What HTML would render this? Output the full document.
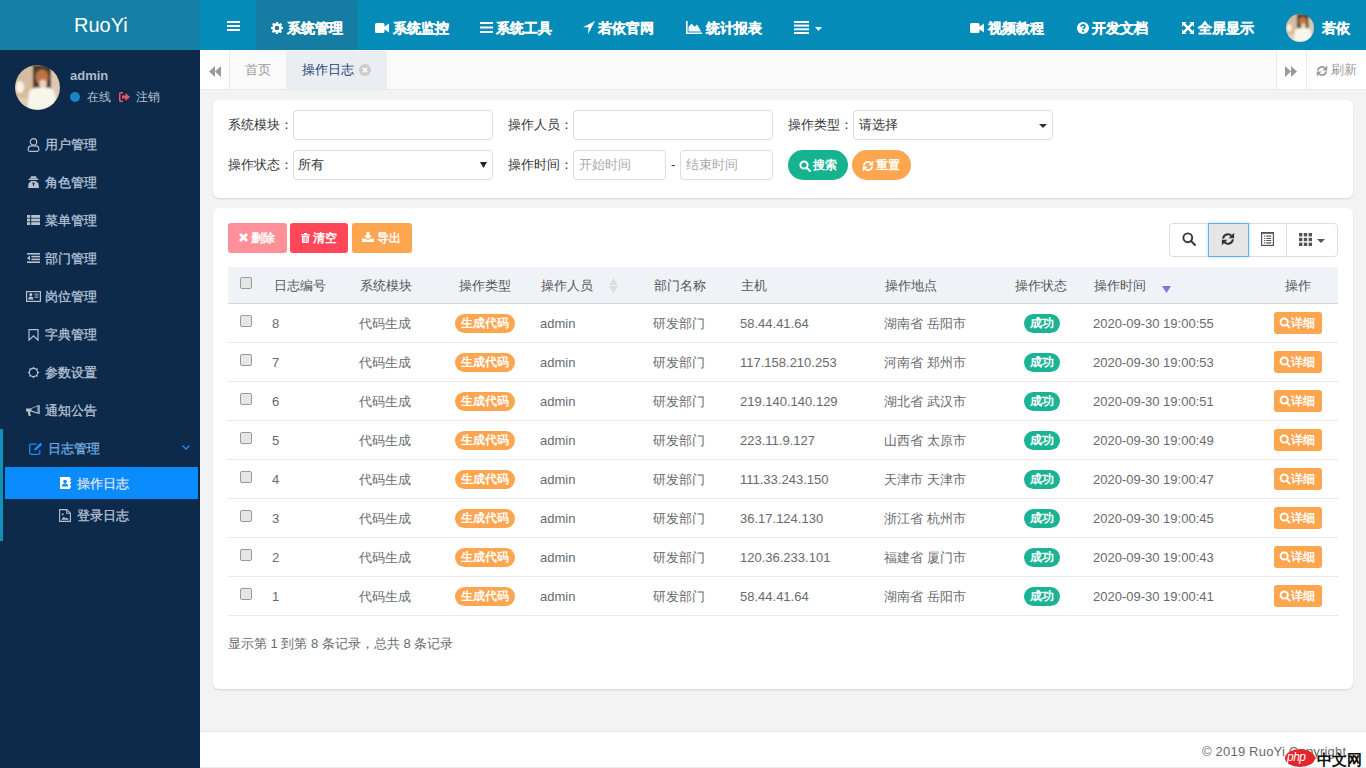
<!DOCTYPE html>
<html><head><meta charset="utf-8">
<style>
*{box-sizing:border-box;margin:0;padding:0}
html,body{width:1366px;height:768px;overflow:hidden}
body{position:relative;background:#f3f3f4;font-family:"Liberation Sans",sans-serif;font-size:13px;color:#676a6c}
.a{position:absolute}
.t{position:absolute;white-space:nowrap;line-height:1}
svg{position:absolute;display:block}
/* header */
#logo{left:0;top:0;width:200px;height:50px;background:#167fa5}
#nav{left:200px;top:0;width:1166px;height:50px;background:#058bb8}
.nv{color:#fff;font-weight:bold;font-size:14px;-webkit-text-stroke:0.3px #fff}
#side{left:0;top:50px;width:200px;height:718px;background:#0d2a4a}
.mi{color:#b6c3d7;font-weight:normal;font-size:13px;-webkit-text-stroke:0.3px #b6c3d7}
/* tabs */
#tabs{left:200px;top:50px;width:1166px;height:40px;background:#fafafa;border-bottom:1px solid #e7e7e7}
.card{background:#fff;border-radius:6px;box-shadow:0 1px 2px rgba(0,0,0,.12)}
.lbl{color:#333;font-size:13px}
.inp{background:#fff;border:1px solid #ddd;border-radius:4px}
.btn{border-radius:3px;color:#fff;font-size:12px}
.th{color:#555;font-size:13px}
.td{color:#676a6c;font-size:13px}
.row{left:228px;width:1110px;height:1px;background:#e7eaec}
.cb{width:12px;height:12px;border:1px solid #999;border-radius:2px;background:#e6e6e6}
.bdg{height:19px;border-radius:10px;color:#fff;font-weight:bold;font-size:12px;line-height:19px;text-align:center}
</style></head><body>

<!-- header -->
<div id="logo" class="a"></div>
<div class="t" style="left:74px;top:15px;font-size:20px;color:#fff">RuoYi</div>
<div id="nav" class="a"></div>
<div class="a" style="left:256px;top:0;width:102px;height:50px;background:#157ca3;border-radius:4px 4px 0 0"></div>
<!-- hamburger -->
<svg style="left:227px;top:21px" width="13" height="10" viewBox="0 0 13 10" fill="#fff"><rect y="0" width="13" height="2"/><rect y="4" width="13" height="2"/><rect y="8" width="13" height="2"/></svg>
<!-- gear -->
<svg style="left:271px;top:22px" width="12" height="12" viewBox="0 0 24 24" fill="#fff"><path d="M10 0h4l.6 3.2 2.2.9 2.7-1.9 2.8 2.8-1.9 2.7.9 2.2L24 10v4l-3.2.6-.9 2.2 1.9 2.7-2.8 2.8-2.7-1.9-2.2.9L14 24h-4l-.6-3.2-2.2-.9-2.7 1.9-2.8-2.8 1.9-2.7-.9-2.2L0 14v-4l3.2-.6.9-2.2-1.9-2.7 2.8-2.8 2.7 1.9 2.2-.9zM12 7.5a4.5 4.5 0 1 0 0 9a4.5 4.5 0 1 0 0-9z"/></svg>
<div class="t nv" style="left:287px;top:21px">系统管理</div>
<!-- camera -->
<svg style="left:375px;top:23px" width="14" height="10" viewBox="0 0 14 10" fill="#fff"><rect x="0" y="0" width="9.5" height="10" rx="1.5"/><path d="M9 4L14 0.5V9.5L9 6z"/></svg>
<div class="t nv" style="left:393px;top:21px">系统监控</div>
<!-- bars -->
<svg style="left:480px;top:22px" width="13" height="11" viewBox="0 0 13 11" fill="#fff"><rect y="0" width="13" height="2"/><rect y="4.5" width="13" height="2"/><rect y="9" width="13" height="2"/></svg>
<div class="t nv" style="left:496px;top:21px">系统工具</div>
<!-- location arrow -->
<svg style="left:583px;top:21px" width="12" height="13" viewBox="0 0 12 13" fill="#fff"><path d="M12 0L0 6.2h5.6L5 13z"/></svg>
<div class="t nv" style="left:598px;top:21px">若依官网</div>
<!-- area chart -->
<svg style="left:686px;top:21px" width="16" height="13" viewBox="0 0 16 13" fill="#fff"><path d="M0 0h1.6v11.4H16V13H0z"/><path d="M2.5 10.5V6l3-3.5 3 3.2 2.5-2.2 4 7z"/></svg>
<div class="t nv" style="left:706px;top:21px">统计报表</div>
<!-- bars4 + caret -->
<svg style="left:794px;top:21px" width="15" height="13" viewBox="0 0 15 13" fill="#fff"><rect y="0" width="15" height="2"/><rect y="3.6" width="15" height="2"/><rect y="7.3" width="15" height="2"/><rect y="11" width="15" height="2"/></svg>
<svg style="left:815px;top:27px" width="7" height="4" viewBox="0 0 7 4" fill="#fff"><path d="M0 0h7L3.5 4z"/></svg>
<!-- right nav -->
<svg style="left:970px;top:23px" width="14" height="10" viewBox="0 0 14 10" fill="#fff"><rect x="0" y="0" width="9.5" height="10" rx="1.5"/><path d="M9 4L14 0.5V9.5L9 6z"/></svg>
<div class="t nv" style="left:988px;top:21px">视频教程</div>
<svg style="left:1077px;top:22px" width="12" height="12" viewBox="0 0 24 24"><circle cx="12" cy="12" r="12" fill="#fff"/><path d="M8.3 9.3Q8.3 5.6 12.1 5.6Q15.9 5.6 15.9 8.9Q15.9 10.8 13.8 12Q12.2 12.9 12.2 14.2" fill="none" stroke="#058bb8" stroke-width="3.3"/><rect x="10.3" y="16.3" width="3.7" height="3.5" fill="#058bb8"/></svg>
<div class="t nv" style="left:1092px;top:21px">开发文档</div>
<svg style="left:1182px;top:22px" width="12" height="12" viewBox="0 0 14 14" fill="#fff"><path d="M0 0h5.5L0 5.5z M14 0v5.5L8.5 0z M0 14V8.5L5.5 14z M14 14H8.5L14 8.5z"/><path d="M2 2L12 12M12 2L2 12" stroke="#fff" stroke-width="2.8"/></svg>
<div class="t nv" style="left:1198px;top:21px">全屏显示</div>
<svg style="left:1286px;top:14px" width="28" height="28" viewBox="0 0 45 45"><defs><filter id="f2" x="-10%" y="-10%" width="120%" height="120%"><feGaussianBlur stdDeviation="1.3"/></filter><clipPath id="c2"><circle cx="22.5" cy="22.5" r="22.5"/></clipPath></defs><g clip-path="url(#c2)"><g filter="url(#f2)"><rect x="-5" y="-5" width="55" height="55" fill="#c4a886"/><rect x="0" y="0" width="17" height="45" fill="#d3bc9f"/><ellipse cx="5" cy="22" rx="4" ry="6" fill="#fbf3e4"/><rect x="18" y="0" width="19" height="24" fill="#4e3b2a"/><rect x="36" y="4" width="9" height="41" fill="#dccab2"/><ellipse cx="27" cy="12" rx="6.5" ry="7.5" fill="#bb7444"/><ellipse cx="28" cy="19" rx="3.8" ry="4.2" fill="#ecd3bf"/><path d="M12 45L14 27Q16 22.5 23 22.5H33Q39 23.5 40 29L42 45z" fill="#f8f5ea"/><rect x="0" y="33" width="13" height="12" fill="#e0cdb3"/></g></g></svg>
<div class="t nv" style="left:1322px;top:21px">若依</div>

<!-- sidebar -->
<div id="side" class="a"></div>
<svg style="left:15px;top:65px" width="45" height="45" viewBox="0 0 45 45"><defs><filter id="f1" x="-10%" y="-10%" width="120%" height="120%"><feGaussianBlur stdDeviation="1.3"/></filter><clipPath id="c1"><circle cx="22.5" cy="22.5" r="22.5"/></clipPath></defs><g clip-path="url(#c1)"><g filter="url(#f1)"><rect x="-5" y="-5" width="55" height="55" fill="#c4a886"/><rect x="0" y="0" width="17" height="45" fill="#d3bc9f"/><ellipse cx="5" cy="22" rx="4" ry="6" fill="#fbf3e4"/><rect x="18" y="0" width="19" height="24" fill="#4e3b2a"/><rect x="36" y="4" width="9" height="41" fill="#dccab2"/><ellipse cx="27" cy="12" rx="6.5" ry="7.5" fill="#bb7444"/><ellipse cx="28" cy="19" rx="3.8" ry="4.2" fill="#ecd3bf"/><path d="M12 45L14 27Q16 22.5 23 22.5H33Q39 23.5 40 29L42 45z" fill="#f8f5ea"/><rect x="0" y="33" width="13" height="12" fill="#e0cdb3"/></g></g></svg>
<div class="t" style="left:70px;top:69px;font-size:13px;font-weight:bold;color:#aebbcc">admin</div>
<div class="a" style="left:70px;top:92px;width:10px;height:10px;border-radius:50%;background:#1c84c6"></div>
<div class="t" style="left:87px;top:91px;font-size:12px;color:#b3c2d3">在线</div>
<svg style="left:119px;top:92px" width="11" height="10" viewBox="0 0 11 10" fill="#ed5565"><path d="M0 1.5Q0 0 1.5 0H4v1.5H1.5v7H4V10H1.5Q0 10 0 8.5z"/><path d="M3 3.5h3.5V1L11 5 6.5 9V6.5H3z"/></svg>
<div class="t" style="left:136px;top:91px;font-size:12px;color:#b3c2d3">注销</div>

<!-- menu icons -->
<svg style="left:27px;top:138px" width="13" height="14" viewBox="0 0 13 14" fill="none" stroke="#b7c2cf" stroke-width="1.2"><circle cx="6.5" cy="3.9" r="3.2"/><path d="M1.1 11.6Q1.1 7.9 4.6 7.9h3.8q3.5 0 3.5 3.7q0 1.8-1.8 1.8H2.9Q1.1 13.4 1.1 11.6z"/></svg>
<div class="t mi" style="left:45px;top:138px">用户管理</div>
<svg style="left:28px;top:176px" width="11" height="12" viewBox="0 0 11 12" fill="#b7c2cf"><path d="M1.2 2.6h8.6L10.6 4H0.4z"/><path d="M3 0.3h5l.7 2.3H2.3z"/><path d="M2.8 5h5.4l.4 1.2 1.6.6.8 5.2H0l.8-5.2 1.6-.6z"/><path d="M4.3 6.6L5.5 11 6.7 6.6z" fill="#0d2a4a"/></svg>
<div class="t mi" style="left:45px;top:176px">角色管理</div>
<svg style="left:27px;top:215px" width="13" height="10" viewBox="0 0 13 10" fill="#b7c2cf"><rect x="0" y="0" width="3.2" height="2.8"/><rect x="4.2" y="0" width="8.8" height="2.8"/><rect x="0" y="3.6" width="3.2" height="2.8"/><rect x="4.2" y="3.6" width="8.8" height="2.8"/><rect x="0" y="7.2" width="3.2" height="2.8"/><rect x="4.2" y="7.2" width="8.8" height="2.8"/></svg>
<div class="t mi" style="left:45px;top:214px">菜单管理</div>
<svg style="left:27px;top:253px" width="13" height="10" viewBox="0 0 13 10" fill="#b7c2cf"><rect x="0" y="0" width="13" height="1.6"/><rect x="4.4" y="2.8" width="8.6" height="1.6"/><rect x="4.4" y="5.6" width="8.6" height="1.6"/><rect x="0" y="8.4" width="13" height="1.6"/><path d="M3 2.6v4.8L0 5z"/></svg>
<div class="t mi" style="left:45px;top:252px">部门管理</div>
<svg style="left:26px;top:291px" width="15" height="11" viewBox="0 0 15 11"><rect x="0.6" y="0.6" width="13.8" height="9.8" fill="none" stroke="#b7c2cf" stroke-width="1.2"/><circle cx="4.8" cy="3.6" r="1.6" fill="#b7c2cf"/><path d="M2.2 8.6q0-3 2.6-3t2.6 3z" fill="#b7c2cf"/><rect x="8.5" y="2.6" width="4" height="2" fill="#8190a5"/><rect x="8.5" y="5.6" width="4" height="1" fill="#b7c2cf"/></svg>
<div class="t mi" style="left:45px;top:290px">岗位管理</div>
<svg style="left:28px;top:329px" width="11" height="12" viewBox="0 0 11 12" fill="none" stroke="#b7c2cf" stroke-width="1.2"><path d="M1 0.6h9v10.6L5.5 6.8 1 11.2z"/></svg>
<div class="t mi" style="left:45px;top:328px">字典管理</div>
<svg style="left:27px;top:366px" width="13" height="13" viewBox="0 0 26 26" fill="none" stroke="#b7c2cf" stroke-width="2.2"><circle cx="13" cy="13" r="8.2"/><path d="M13 1.5l2 3.5h-4zM13 24.5l2-3.5h-4zM1.5 13l3.5 2v-4zM24.5 13l-3.5 2v-4zM4.9 4.9l3.9 1.1-2.8 2.8zM21.1 21.1l-3.9-1.1 2.8-2.8zM21.1 4.9l-1.1 3.9-2.8-2.8zM4.9 21.1l1.1-3.9 2.8 2.8z" fill="#b7c2cf" stroke-width="0.8"/></svg>
<div class="t mi" style="left:45px;top:366px">参数设置</div>
<svg style="left:26px;top:405px" width="14" height="11" viewBox="0 0 14 11" fill="#b7c2cf"><path d="M0 3.5h4.5L12.5 0v9L4.5 6.5H4l.8 4.5H2.6L1.8 6.5H0z"/><path d="M12.5 0h1.2v9h-1.2z"/><path d="M5.5 3.8L11.5 1.2v6.4L5.5 5.6z" fill="#0d2a4a"/></svg>
<div class="t mi" style="left:45px;top:404px">通知公告</div>

<!-- active group -->
<div class="a" style="left:0;top:429px;width:3px;height:112px;background:#0f91b9"></div>
<svg style="left:29px;top:442px" width="14" height="13" viewBox="0 0 14 13" fill="none" stroke="#1890ff" stroke-width="1.3"><path d="M7.5 2.2H2.2Q0.7 2.2 0.7 3.7v7.1q0 1.5 1.5 1.5h7.1q1.5 0 1.5-1.5V7.8"/><path d="M5.2 8.6l.5-2.2L11.5.7l1.7 1.7-5.8 5.7z" fill="#1890ff" stroke="none"/></svg>
<div class="t mi" style="left:48px;top:442px;color:#1890ff">日志管理</div>
<svg style="left:182px;top:445px" width="8" height="5" viewBox="0 0 8 5" fill="none" stroke="#1890ff" stroke-width="1.3"><path d="M0.5 0.5L4 4 7.5 0.5"/></svg>
<div class="a" style="left:5px;top:467px;width:193px;height:32px;background:#0a8cff"></div>
<svg style="left:59px;top:477px" width="12" height="12" viewBox="0 0 12 12" fill="#fff"><path d="M1 0h10v12H1z"/><path d="M11 1.5h1v2h-1zM11 5h1v2h-1zM11 8.5h1v2h-1z"/><circle cx="6" cy="4.6" r="1.8" fill="#0a8cff"/><path d="M2.8 9.5q0-3 3.2-3t3.2 3z" fill="#0a8cff"/></svg>
<div class="t mi" style="left:77px;top:477px;color:#fff">操作日志</div>
<svg style="left:59px;top:509px" width="12" height="13" viewBox="0 0 12 13" fill="none" stroke="#b7c2cf" stroke-width="1.1"><path d="M0.6 0.6h7.2l3.6 3.6v8.2H0.6z"/><path d="M7.8 0.6v3.6h3.6"/><path d="M2.2 10.8l2.6-3 1.8 1.8 1.2-1 2 2.2z" fill="#b7c2cf" stroke="none"/><circle cx="3.6" cy="5.2" r="1" fill="#b7c2cf" stroke="none"/></svg>
<div class="t mi" style="left:77px;top:509px">登录日志</div>

<!-- tabs -->
<div id="tabs" class="a"></div>
<div class="a" style="left:200px;top:50px;width:30px;height:39px;background:#fff;border-right:1px solid #e7eaec"></div>
<svg style="left:209px;top:66px" width="12" height="11" viewBox="0 0 12 11" fill="#999"><path d="M6 0v11L0 5.5z M12 0v11L6 5.5z"/></svg>
<div class="t" style="left:245px;top:63px;color:#999">首页</div>
<div class="a" style="left:286px;top:51px;width:101px;height:38px;background:#eaedf1"></div>
<div class="t" style="left:302px;top:63px;color:#1f4376">操作日志</div>
<svg style="left:359px;top:64px" width="12" height="12" viewBox="0 0 12 12"><circle cx="6" cy="6" r="6" fill="#ccc"/><path d="M3.8 3.8L8.2 8.2M8.2 3.8L3.8 8.2" stroke="#fff" stroke-width="1.6"/></svg>
<div class="a" style="left:1276px;top:50px;width:90px;height:39px;background:#fff"></div>
<div class="a" style="left:1276px;top:50px;width:1px;height:39px;background:#e7eaec"></div>
<div class="a" style="left:1306px;top:50px;width:1px;height:39px;background:#e7eaec"></div>
<svg style="left:1285px;top:66px" width="12" height="11" viewBox="0 0 12 11" fill="#999"><path d="M0 0v11L6 5.5z M6 0v11L12 5.5z"/></svg>
<svg style="left:1316px;top:65px" width="12" height="12" viewBox="0 0 24 24" fill="#999"><path d="M3.6 11.2A8.4 8.4 0 0 1 18.2 6.6" stroke="#999" stroke-width="3.4" fill="none"/><path d="M22.5 1.2V10.8H12.9z" fill="#999"/><path d="M20.4 12.8A8.4 8.4 0 0 1 5.8 17.4" stroke="#999" stroke-width="3.4" fill="none"/><path d="M1.5 22.8V13.2H11.1z" fill="#999"/></svg>
<div class="t" style="left:1331px;top:63px;color:#999">刷新</div>

<!-- cards -->
<div class="a card" style="left:213px;top:100px;width:1140px;height:98px"></div>
<div class="a card" style="left:213px;top:208px;width:1140px;height:481px"></div>
<!-- search form -->
<div class="t lbl" style="left:228px;top:118px">系统模块：</div>
<div class="a inp" style="left:293px;top:110px;width:200px;height:30px"></div>
<div class="t lbl" style="left:508px;top:118px">操作人员：</div>
<div class="a inp" style="left:573px;top:110px;width:200px;height:30px"></div>
<div class="t lbl" style="left:788px;top:118px">操作类型：</div>
<div class="a inp" style="left:853px;top:110px;width:200px;height:30px"></div>
<div class="t" style="left:859px;top:118px;color:#333">请选择</div>
<svg style="left:1039px;top:124px" width="8" height="4" viewBox="0 0 8 4" fill="#333"><path d="M0 0h8L4 4z"/></svg>
<div class="t lbl" style="left:228px;top:158px">操作状态：</div>
<div class="a inp" style="left:293px;top:150px;width:200px;height:30px"></div>
<div class="t" style="left:298px;top:158px;color:#333">所有</div>
<svg style="left:480px;top:162px" width="7" height="6" viewBox="0 0 7 6" fill="#222"><path d="M0 0h7L3.5 6z"/></svg>
<div class="t lbl" style="left:508px;top:158px">操作时间：</div>
<div class="a inp" style="left:573px;top:150px;width:93px;height:30px"></div>
<div class="t" style="left:579px;top:158px;color:#aaa">开始时间</div>
<div class="t" style="left:671px;top:158px;color:#333">-</div>
<div class="a inp" style="left:680px;top:150px;width:93px;height:30px"></div>
<div class="t" style="left:686px;top:158px;color:#aaa">结束时间</div>
<div class="a" style="left:788px;top:150px;width:60px;height:30px;border-radius:15px;background:#15b390"></div>
<svg style="left:799px;top:160px" width="12" height="12" viewBox="0 0 12 12" fill="none" stroke="#fff" stroke-width="2"><circle cx="5" cy="5" r="3.6"/><path d="M7.6 7.6L11 11" stroke-linecap="round"/></svg>
<div class="t" style="left:813px;top:159px;color:#fff;font-size:12px;font-weight:bold">搜索</div>
<div class="a" style="left:852px;top:150px;width:59px;height:30px;border-radius:15px;background:#fda54f"></div>
<svg style="left:862px;top:160px" width="12" height="12" viewBox="0 0 24 24" fill="#fff"><path d="M3.6 11.2A8.4 8.4 0 0 1 18.2 6.6" stroke="#fff" stroke-width="3.4" fill="none"/><path d="M22.5 1.2V10.8H12.9z" fill="#fff"/><path d="M20.4 12.8A8.4 8.4 0 0 1 5.8 17.4" stroke="#fff" stroke-width="3.4" fill="none"/><path d="M1.5 22.8V13.2H11.1z" fill="#fff"/></svg>
<div class="t" style="left:876px;top:159px;color:#fff;font-size:12px;font-weight:bold">重置</div>

<!-- table toolbar -->
<div class="a btn" style="left:228px;top:223px;width:59px;height:30px;background:#ff8f98"></div>
<svg style="left:239px;top:233px" width="9" height="9" viewBox="0 0 9 9" stroke="#fff" stroke-width="2.9"><path d="M1 1L8 8M8 1L1 8"/></svg>
<div class="t" style="left:251px;top:232px;color:#fff;font-size:12px;font-weight:bold">删除</div>
<div class="a btn" style="left:290px;top:223px;width:58px;height:30px;background:#ff4757"></div>
<svg style="left:301px;top:233px" width="9" height="10" viewBox="0 0 9 10" fill="#fff"><path d="M0 1.2h9v1.2H0z M3 0h3v1.2H3z M0.8 3h7.4l-.5 7H1.3z"/><path d="M3 4v5M4.5 4v5M6 4v5" stroke="#ff4757" stroke-width="0.6"/></svg>
<div class="t" style="left:313px;top:232px;color:#fff;font-size:12px;font-weight:bold">清空</div>
<div class="a btn" style="left:352px;top:223px;width:60px;height:30px;background:#fda54f"></div>
<svg style="left:362px;top:232px" width="12" height="10" viewBox="0 0 12 10" fill="#fff"><path d="M4.5 0h3v3.5H10L6 7.2 2 3.5h2.5z"/><path d="M0 6.5h3.6L6 8.6l2.4-2.1H12V10H0z"/></svg>
<div class="t" style="left:377px;top:232px;color:#fff;font-size:12px;font-weight:bold">导出</div>
<div class="a" style="left:1169px;top:223px;width:169px;height:34px;border:1px solid #ddd;border-radius:4px;background:#fff"></div>
<div class="a" style="left:1286px;top:224px;width:1px;height:32px;background:#ddd"></div>
<div class="a" style="left:1208px;top:223px;width:41px;height:34px;border:1px solid #66afe9;background:#e6e6e6;box-shadow:0 0 3px rgba(102,175,233,.5)"></div>
<svg style="left:1182px;top:232px" width="14" height="14" viewBox="0 0 14 14" fill="none" stroke="#333" stroke-width="1.9"><circle cx="5.8" cy="5.8" r="4.4"/><path d="M9 9L13 13" stroke-linecap="round"/></svg>
<svg style="left:1221px;top:232px" width="14" height="14" viewBox="0 0 24 24" fill="#333"><path d="M3.6 11.2A8.4 8.4 0 0 1 18.2 6.6" stroke="#333" stroke-width="3.4" fill="none"/><path d="M22.5 1.2V10.8H12.9z" fill="#333"/><path d="M20.4 12.8A8.4 8.4 0 0 1 5.8 17.4" stroke="#333" stroke-width="3.4" fill="none"/><path d="M1.5 22.8V13.2H11.1z" fill="#333"/></svg>
<svg style="left:1261px;top:232px" width="13" height="14" viewBox="0 0 13 14"><rect x="0.6" y="0.6" width="11.8" height="12.8" fill="none" stroke="#555" stroke-width="1.2"/><rect x="0" y="0" width="13" height="1.8" fill="#555"/><path d="M3 4.1h1.2M3 6.5h1.2M3 8.5h1.2M3 10.9h1.2M5.2 4.1h5M5.2 6.5h5M5.2 8.5h5M5.2 10.9h5" stroke="#555" stroke-width="1.1"/></svg>
<svg style="left:1299px;top:233px" width="13" height="13" viewBox="0 0 13 13" fill="#555"><rect x="0" y="0" width="3.4" height="3.4"/><rect x="4.8" y="0" width="3.4" height="3.4"/><rect x="9.6" y="0" width="3.4" height="3.4"/><rect x="0" y="4.8" width="3.4" height="3.4"/><rect x="4.8" y="4.8" width="3.4" height="3.4"/><rect x="9.6" y="4.8" width="3.4" height="3.4"/><rect x="0" y="9.6" width="3.4" height="3.4"/><rect x="4.8" y="9.6" width="3.4" height="3.4"/><rect x="9.6" y="9.6" width="3.4" height="3.4"/></svg>
<svg style="left:1317px;top:239px" width="8" height="4" viewBox="0 0 8 4" fill="#555"><path d="M0 0h8L4 4z"/></svg>
<!-- table header -->
<div class="a" style="left:228px;top:267px;width:1110px;height:36px;background:#eff3f8"></div>
<div class="a" style="left:228px;top:303px;width:1110px;height:1px;background:#d4d4d4"></div>
<div class="a cb" style="left:240px;top:277px"></div>
<div class="t th" style="left:274px;top:279px">日志编号</div>
<div class="t th" style="left:360px;top:279px">系统模块</div>
<div class="t th" style="left:459px;top:279px">操作类型</div>
<div class="t th" style="left:541px;top:279px">操作人员</div>
<div class="t th" style="left:654px;top:279px">部门名称</div>
<div class="t th" style="left:741px;top:279px">主机</div>
<div class="t th" style="left:885px;top:279px">操作地点</div>
<div class="t th" style="left:1015px;top:279px">操作状态</div>
<div class="t th" style="left:1094px;top:279px">操作时间</div>
<div class="t th" style="left:1285px;top:279px">操作</div>
<svg style="left:609px;top:278px" width="9" height="15" viewBox="0 0 9 15" fill="#dcdcdc"><path d="M4.5 0L9 7H0z M0 8h9L4.5 15z"/></svg>
<svg style="left:1162px;top:286px" width="9" height="7" viewBox="0 0 9 7" fill="#7a7ad8"><path d="M0 0h9L4.5 7z"/></svg>
<!-- row 8 -->
<div class="a row" style="top:342px"></div>
<div class="a cb" style="left:240px;top:315px"></div>
<div class="t td" style="left:272px;top:317px">8</div>
<div class="t td" style="left:359px;top:317px">代码生成</div>
<div class="a bdg" style="left:455px;top:314px;width:60px;background:#fda54f">生成代码</div>
<div class="t td" style="left:540px;top:317px">admin</div>
<div class="t td" style="left:653px;top:317px">研发部门</div>
<div class="t td" style="left:740px;top:317px">58.44.41.64</div>
<div class="t td" style="left:884px;top:317px">湖南省 岳阳市</div>
<div class="a bdg" style="left:1024px;top:314px;width:36px;background:#1ab394">成功</div>
<div class="t td" style="left:1093px;top:317px">2020-09-30 19:00:55</div>
<div class="a btn" style="left:1274px;top:312px;width:48px;height:22px;background:#fda54f"></div>
<svg style="left:1279px;top:317px" width="12" height="12" viewBox="0 0 12 12" fill="none" stroke="#fff" stroke-width="2"><circle cx="5.2" cy="5" r="3.6"/><path d="M7.8 7.8L10.6 10.6" stroke-linecap="round"/></svg>
<div class="t" style="left:1291px;top:317px;color:#fff;font-size:12px;font-weight:bold">详细</div>
<!-- row 7 -->
<div class="a row" style="top:381px"></div>
<div class="a cb" style="left:240px;top:354px"></div>
<div class="t td" style="left:272px;top:356px">7</div>
<div class="t td" style="left:359px;top:356px">代码生成</div>
<div class="a bdg" style="left:455px;top:353px;width:60px;background:#fda54f">生成代码</div>
<div class="t td" style="left:540px;top:356px">admin</div>
<div class="t td" style="left:653px;top:356px">研发部门</div>
<div class="t td" style="left:740px;top:356px">117.158.210.253</div>
<div class="t td" style="left:884px;top:356px">河南省 郑州市</div>
<div class="a bdg" style="left:1024px;top:353px;width:36px;background:#1ab394">成功</div>
<div class="t td" style="left:1093px;top:356px">2020-09-30 19:00:53</div>
<div class="a btn" style="left:1274px;top:351px;width:48px;height:22px;background:#fda54f"></div>
<svg style="left:1279px;top:356px" width="12" height="12" viewBox="0 0 12 12" fill="none" stroke="#fff" stroke-width="2"><circle cx="5.2" cy="5" r="3.6"/><path d="M7.8 7.8L10.6 10.6" stroke-linecap="round"/></svg>
<div class="t" style="left:1291px;top:356px;color:#fff;font-size:12px;font-weight:bold">详细</div>
<!-- row 6 -->
<div class="a row" style="top:420px"></div>
<div class="a cb" style="left:240px;top:393px"></div>
<div class="t td" style="left:272px;top:395px">6</div>
<div class="t td" style="left:359px;top:395px">代码生成</div>
<div class="a bdg" style="left:455px;top:392px;width:60px;background:#fda54f">生成代码</div>
<div class="t td" style="left:540px;top:395px">admin</div>
<div class="t td" style="left:653px;top:395px">研发部门</div>
<div class="t td" style="left:740px;top:395px">219.140.140.129</div>
<div class="t td" style="left:884px;top:395px">湖北省 武汉市</div>
<div class="a bdg" style="left:1024px;top:392px;width:36px;background:#1ab394">成功</div>
<div class="t td" style="left:1093px;top:395px">2020-09-30 19:00:51</div>
<div class="a btn" style="left:1274px;top:390px;width:48px;height:22px;background:#fda54f"></div>
<svg style="left:1279px;top:395px" width="12" height="12" viewBox="0 0 12 12" fill="none" stroke="#fff" stroke-width="2"><circle cx="5.2" cy="5" r="3.6"/><path d="M7.8 7.8L10.6 10.6" stroke-linecap="round"/></svg>
<div class="t" style="left:1291px;top:395px;color:#fff;font-size:12px;font-weight:bold">详细</div>
<!-- row 5 -->
<div class="a row" style="top:459px"></div>
<div class="a cb" style="left:240px;top:432px"></div>
<div class="t td" style="left:272px;top:434px">5</div>
<div class="t td" style="left:359px;top:434px">代码生成</div>
<div class="a bdg" style="left:455px;top:431px;width:60px;background:#fda54f">生成代码</div>
<div class="t td" style="left:540px;top:434px">admin</div>
<div class="t td" style="left:653px;top:434px">研发部门</div>
<div class="t td" style="left:740px;top:434px">223.11.9.127</div>
<div class="t td" style="left:884px;top:434px">山西省 太原市</div>
<div class="a bdg" style="left:1024px;top:431px;width:36px;background:#1ab394">成功</div>
<div class="t td" style="left:1093px;top:434px">2020-09-30 19:00:49</div>
<div class="a btn" style="left:1274px;top:429px;width:48px;height:22px;background:#fda54f"></div>
<svg style="left:1279px;top:434px" width="12" height="12" viewBox="0 0 12 12" fill="none" stroke="#fff" stroke-width="2"><circle cx="5.2" cy="5" r="3.6"/><path d="M7.8 7.8L10.6 10.6" stroke-linecap="round"/></svg>
<div class="t" style="left:1291px;top:434px;color:#fff;font-size:12px;font-weight:bold">详细</div>
<!-- row 4 -->
<div class="a row" style="top:498px"></div>
<div class="a cb" style="left:240px;top:471px"></div>
<div class="t td" style="left:272px;top:473px">4</div>
<div class="t td" style="left:359px;top:473px">代码生成</div>
<div class="a bdg" style="left:455px;top:470px;width:60px;background:#fda54f">生成代码</div>
<div class="t td" style="left:540px;top:473px">admin</div>
<div class="t td" style="left:653px;top:473px">研发部门</div>
<div class="t td" style="left:740px;top:473px">111.33.243.150</div>
<div class="t td" style="left:884px;top:473px">天津市 天津市</div>
<div class="a bdg" style="left:1024px;top:470px;width:36px;background:#1ab394">成功</div>
<div class="t td" style="left:1093px;top:473px">2020-09-30 19:00:47</div>
<div class="a btn" style="left:1274px;top:468px;width:48px;height:22px;background:#fda54f"></div>
<svg style="left:1279px;top:473px" width="12" height="12" viewBox="0 0 12 12" fill="none" stroke="#fff" stroke-width="2"><circle cx="5.2" cy="5" r="3.6"/><path d="M7.8 7.8L10.6 10.6" stroke-linecap="round"/></svg>
<div class="t" style="left:1291px;top:473px;color:#fff;font-size:12px;font-weight:bold">详细</div>
<!-- row 3 -->
<div class="a row" style="top:537px"></div>
<div class="a cb" style="left:240px;top:510px"></div>
<div class="t td" style="left:272px;top:512px">3</div>
<div class="t td" style="left:359px;top:512px">代码生成</div>
<div class="a bdg" style="left:455px;top:509px;width:60px;background:#fda54f">生成代码</div>
<div class="t td" style="left:540px;top:512px">admin</div>
<div class="t td" style="left:653px;top:512px">研发部门</div>
<div class="t td" style="left:740px;top:512px">36.17.124.130</div>
<div class="t td" style="left:884px;top:512px">浙江省 杭州市</div>
<div class="a bdg" style="left:1024px;top:509px;width:36px;background:#1ab394">成功</div>
<div class="t td" style="left:1093px;top:512px">2020-09-30 19:00:45</div>
<div class="a btn" style="left:1274px;top:507px;width:48px;height:22px;background:#fda54f"></div>
<svg style="left:1279px;top:512px" width="12" height="12" viewBox="0 0 12 12" fill="none" stroke="#fff" stroke-width="2"><circle cx="5.2" cy="5" r="3.6"/><path d="M7.8 7.8L10.6 10.6" stroke-linecap="round"/></svg>
<div class="t" style="left:1291px;top:512px;color:#fff;font-size:12px;font-weight:bold">详细</div>
<!-- row 2 -->
<div class="a row" style="top:576px"></div>
<div class="a cb" style="left:240px;top:549px"></div>
<div class="t td" style="left:272px;top:551px">2</div>
<div class="t td" style="left:359px;top:551px">代码生成</div>
<div class="a bdg" style="left:455px;top:548px;width:60px;background:#fda54f">生成代码</div>
<div class="t td" style="left:540px;top:551px">admin</div>
<div class="t td" style="left:653px;top:551px">研发部门</div>
<div class="t td" style="left:740px;top:551px">120.36.233.101</div>
<div class="t td" style="left:884px;top:551px">福建省 厦门市</div>
<div class="a bdg" style="left:1024px;top:548px;width:36px;background:#1ab394">成功</div>
<div class="t td" style="left:1093px;top:551px">2020-09-30 19:00:43</div>
<div class="a btn" style="left:1274px;top:546px;width:48px;height:22px;background:#fda54f"></div>
<svg style="left:1279px;top:551px" width="12" height="12" viewBox="0 0 12 12" fill="none" stroke="#fff" stroke-width="2"><circle cx="5.2" cy="5" r="3.6"/><path d="M7.8 7.8L10.6 10.6" stroke-linecap="round"/></svg>
<div class="t" style="left:1291px;top:551px;color:#fff;font-size:12px;font-weight:bold">详细</div>
<!-- row 1 -->
<div class="a row" style="top:615px"></div>
<div class="a cb" style="left:240px;top:588px"></div>
<div class="t td" style="left:272px;top:590px">1</div>
<div class="t td" style="left:359px;top:590px">代码生成</div>
<div class="a bdg" style="left:455px;top:587px;width:60px;background:#fda54f">生成代码</div>
<div class="t td" style="left:540px;top:590px">admin</div>
<div class="t td" style="left:653px;top:590px">研发部门</div>
<div class="t td" style="left:740px;top:590px">58.44.41.64</div>
<div class="t td" style="left:884px;top:590px">湖南省 岳阳市</div>
<div class="a bdg" style="left:1024px;top:587px;width:36px;background:#1ab394">成功</div>
<div class="t td" style="left:1093px;top:590px">2020-09-30 19:00:41</div>
<div class="a btn" style="left:1274px;top:585px;width:48px;height:22px;background:#fda54f"></div>
<svg style="left:1279px;top:590px" width="12" height="12" viewBox="0 0 12 12" fill="none" stroke="#fff" stroke-width="2"><circle cx="5.2" cy="5" r="3.6"/><path d="M7.8 7.8L10.6 10.6" stroke-linecap="round"/></svg>
<div class="t" style="left:1291px;top:590px;color:#fff;font-size:12px;font-weight:bold">详细</div>
<div class="t td" style="left:228px;top:637px">显示第 1 到第 8 条记录，总共 8 条记录</div>
<!-- footer -->
<div class="a" style="left:200px;top:731px;width:1166px;height:37px;background:#fff;border-top:1px solid #e7eaec"></div>
<div class="t" style="left:1202px;top:745px;color:#676a6c;font-size:13px;letter-spacing:0.2px">© 2019 RuoYi Copyright</div>
<div class="a" style="left:200px;top:767px;width:1166px;height:1px;background:#ececec"></div>
<!-- watermark -->
<div class="a" style="left:1285px;top:749px;width:30px;height:18px;border-radius:50%;background:#e3262b"></div>
<div class="t" style="left:1287px;top:751px;color:#fff;font-size:12px;font-style:italic;letter-spacing:-0.5px">php</div>
<div class="t" style="left:1317px;top:752px;color:#111;font-size:15px;font-weight:bold">中文网</div>

</body></html>
